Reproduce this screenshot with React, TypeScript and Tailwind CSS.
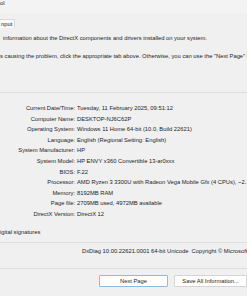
import React from "react";

const rows: [string, string][] = [
  ["Current Date/Time:", "Tuesday, 11 February 2025, 09:51:12"],
  ["Computer Name:", "DESKTOP-NJ6C62P"],
  ["Operating System:", "Windows 11 Home 64-bit (10.0, Build 22621)"],
  ["Language:", "English (Regional Setting: English)"],
  ["System Manufacturer:", "HP"],
  ["System Model:", "HP ENVY x360 Convertible 13-ar0xxx"],
  ["BIOS:", "F.22"],
  ["Processor:", "AMD Ryzen 3 3300U with Radeon Vega Mobile Gfx   (4 CPUs), ~2.1GHz"],
  ["Memory:", "8192MB RAM"],
  ["Page file:", "2709MB used, 4972MB available"],
  ["DirectX Version:", "DirectX 12"],
];

const App = () => {
  return (
    <div className="w-[247px] h-[296px] overflow-hidden bg-[#f0f0f0] text-[#1c1c1c] text-[5.8px] leading-[7px] whitespace-nowrap font-['Liberation_Sans',Arial,sans-serif]">
      <header className="h-[13px] bg-[#f3f3f3]">
        <span>ol</span>
      </header>

      <div className="mt-[6px] flex">
        <div className="h-[9px] w-[15px] bg-[#f9f9f9] border-t border-r border-[#dadada] pl-[1px] leading-[8px]">
          nput
        </div>
      </div>

      <main>
        <p className="mt-[7px] pl-[3px]">
          information about the DirectX components and drivers installed on your system.
        </p>
        <p className="mt-[11px]">
          s causing the problem, click the appropriate tab above. Otherwise, you can use the "Next Page" button below to visit each page in sequence.
        </p>

        <div className="mt-[32px] h-px bg-[#dedede]" />

        <div className="mt-[10px] grid grid-cols-[75px_1fr] gap-x-[2px] leading-[10.6px]">
          {rows.map(([label, value]) => (
            <React.Fragment key={label}>
              <span className="text-right">{label}</span>
              <span>{value}</span>
            </React.Fragment>
          ))}
        </div>

        <p className="mt-[9px]">igital signatures</p>

        <div className="mt-[6px] h-px bg-[#dedede]" />

        <p className="mt-[5px] pl-[82px]">
          DxDiag 10.00.22621.0001 64-bit Unicode&nbsp;&nbsp;Copyright © Microsoft. All rights reserved.
        </p>

        <div className="mt-[13px] h-px bg-[#dedede]" />
      </main>

      <footer className="mt-[6px] flex gap-[6px] pl-[99px]">
        <button className="w-[70px] h-[12px] bg-white border border-[#8fb8e3] rounded-[1px] leading-[10px]">
          Next Page
        </button>
        <button className="w-[74px] h-[12px] bg-white border border-[#d4d4d4] rounded-[1px] leading-[10px]">
          Save All Information...
        </button>
      </footer>
    </div>
  );
};

export default App;
